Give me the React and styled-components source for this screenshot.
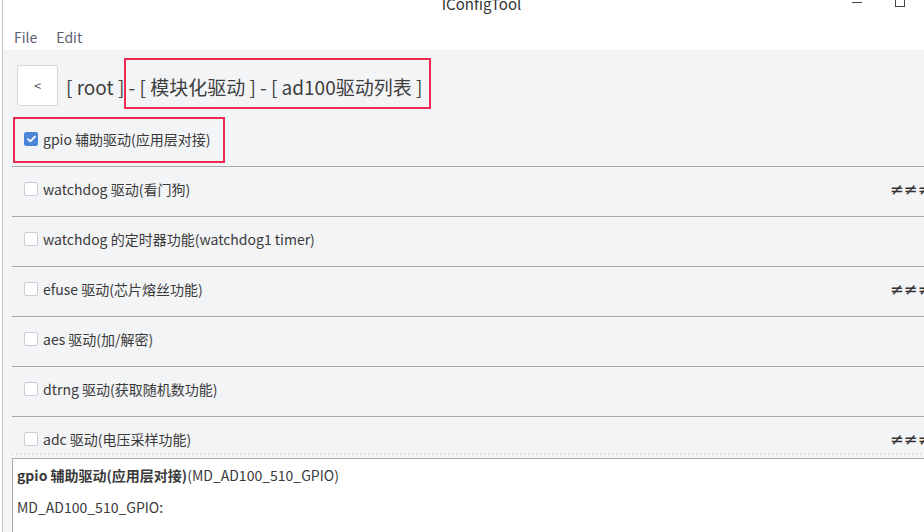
import React from "react";
import styled, { createGlobalStyle } from "styled-components";

const Global = createGlobalStyle`
  html, body { margin: 0; padding: 0; overflow: hidden; background: #ffffff; }
  body { font-family: "Noto Sans CJK SC", "Noto Sans", sans-serif; color: #333; }
`;

const Window = styled.div`
  position: relative;
  width: 921px;
  height: 532px;
  margin-left: 2px;
  border-left: 1px solid #c4c4c4;
  display: flex;
  flex-direction: column;
  background: #fff;
  overflow: hidden;
`;

const TitleBar = styled.div`
  height: 20px;
  position: relative;
  display: flex;
  justify-content: center;
  overflow: hidden;
`;

const Title = styled.div`
  font-size: 15px;
  line-height: 16px;
  margin-top: -4px;
  margin-left: 36px;
  color: #333;
`;

const Controls = styled.div`
  position: absolute;
  right: 0;
  top: 0;
  display: flex;
  align-items: flex-start;
`;

const MinBtn = styled.div`
  width: 10px;
  height: 1px;
  background: #444;
  margin-top: 2px;
  margin-right: 33px;
`;

const MaxBtn = styled.div`
  width: 8px;
  height: 10px;
  border: 1px solid #444;
  margin-top: -5px;
  margin-right: 19px;
`;

const MenuBar = styled.div`
  height: 30px;
  display: flex;
  align-items: center;
  padding-left: 11px;
  gap: 19px;
`;

const MenuItem = styled.span`
  font-size: 14px;
  color: #5a6072;
  margin-top: 4px;
`;

const Content = styled.div`
  flex: 1;
  background: #f3f4f6;
  display: flex;
  flex-direction: column;
  min-height: 0;
  position: relative;
`;

const Header = styled.div`
  display: flex;
  align-items: center;
  padding: 15px 0 0 14px;
`;

const BackButton = styled.button`
  width: 41px;
  height: 41px;
  background: #fff;
  border: 1px solid #d6d6d6;
  border-radius: 3px;
  font-family: "Noto Sans CJK SC", sans-serif;
  font-size: 13px;
  color: #555;
  padding: 0;
  cursor: pointer;
`;

const Crumbs = styled.div`
  margin-left: 8px;
  font-size: 19px;
  color: #3e3e3e;
  white-space: pre;
  margin-top: 1px;
`;

const List = styled.div`
  margin-top: 11px;
  margin-left: 9px;
  height: 341px;
  overflow: hidden;
  position: relative;
  &::after {
    content: "";
    position: absolute;
    left: 0;
    right: 0;
    bottom: 3px;
    height: 2px;
    background: repeating-linear-gradient(90deg, #e4e5e8 0 2px, #f8f8f9 2px 4px);
  }
`;

const Row = styled.div`
  height: 50px;
  box-sizing: border-box;
  border-bottom: 1px solid #a9aaad;
  display: flex;
  align-items: center;
  padding: 0 0 6px 12px;
  flex-shrink: 0;
`;

const Check = styled.span`
  width: 14px;
  height: 14px;
  box-sizing: border-box;
  border-radius: 2px;
  border: 1px solid ${(p) => (p.$checked ? "#4a86d8" : "#c9cdd5")};
  background: ${(p) => (p.$checked ? "#4a86d8" : "#fff")};
  display: flex;
  align-items: center;
  justify-content: center;
  margin-right: 5px;
  flex-shrink: 0;
`;

const Label = styled.span`
  font-size: 14px;
  color: #3a3a3a;
  flex: 1;
  white-space: nowrap;
`;

const Marker = styled.span`
  width: 34px;
  overflow: hidden;
  white-space: nowrap;
  font-family: "DejaVu Sans", sans-serif;
  font-size: 16.5px;
  color: #333;
  margin-top: 1px;
`;

const Detail = styled.div`
  flex: 1;
  margin-left: 9px;
  background: #fff;
  border-top: 1px solid #a9aaad;
  border-left: 1px solid #a9aaad;
  padding: 6px 0 0 4px;
  font-size: 14px;
  color: #3a3a3a;
`;

const DetailLine = styled.div`
  line-height: 20px;
  margin-bottom: 12px;
  white-space: nowrap;
`;

const Strong = styled.b`
  font-weight: 700;
`;

const Annotation = styled.div`
  position: absolute;
  border: 2px solid #ee2a50;
  box-sizing: border-box;
  pointer-events: none;
`;

const rows = [
  { label: "gpio 辅助驱动(应用层对接)", checked: true },
  { label: "watchdog 驱动(看门狗)", mark: true },
  { label: "watchdog 的定时器功能(watchdog1 timer)" },
  { label: "efuse 驱动(芯片熔丝功能)", mark: true },
  { label: "aes 驱动(加/解密)" },
  { label: "dtrng 驱动(获取随机数功能)" },
  { label: "adc 驱动(电压采样功能)", mark: true },
];

export default function App() {
  return (
    <>
      <Global />
      <Window>
        <TitleBar>
          <Title>IConfigTool</Title>
          <Controls>
            <MinBtn />
            <MaxBtn />
          </Controls>
        </TitleBar>
        <MenuBar>
          <MenuItem>File</MenuItem>
          <MenuItem>Edit</MenuItem>
        </MenuBar>
        <Content>
          <Header>
            <BackButton>&lt;</BackButton>
            <Crumbs>[ root ] - [ 模块化驱动 ] - [ ad100驱动列表 ]</Crumbs>
          </Header>
          <List>
            {rows.map((r, i) => (
              <Row key={i}>
                <Check $checked={r.checked}>
                  {r.checked && (
                    <svg width="9" height="8" viewBox="0 0 9 8">
                      <path d="M1 4.2 L3.4 6.4 L8 1.4" fill="none" stroke="#fff" strokeWidth="1.8" strokeLinecap="round" strokeLinejoin="round" />
                    </svg>
                  )}
                </Check>
                <Label>{r.label}</Label>
                {r.mark && <Marker>≠≠≠≠</Marker>}
              </Row>
            ))}
          </List>
          <Detail>
            <DetailLine>
              <Strong>gpio 辅助驱动(应用层对接)</Strong>(MD_AD100_510_GPIO)
            </DetailLine>
            <DetailLine>MD_AD100_510_GPIO:</DetailLine>
          </Detail>
        </Content>
        <Annotation style={{ left: 121, top: 58, width: 307, height: 51 }} />
        <Annotation style={{ left: 10, top: 117, width: 212, height: 46 }} />
      </Window>
    </>
  );
}
